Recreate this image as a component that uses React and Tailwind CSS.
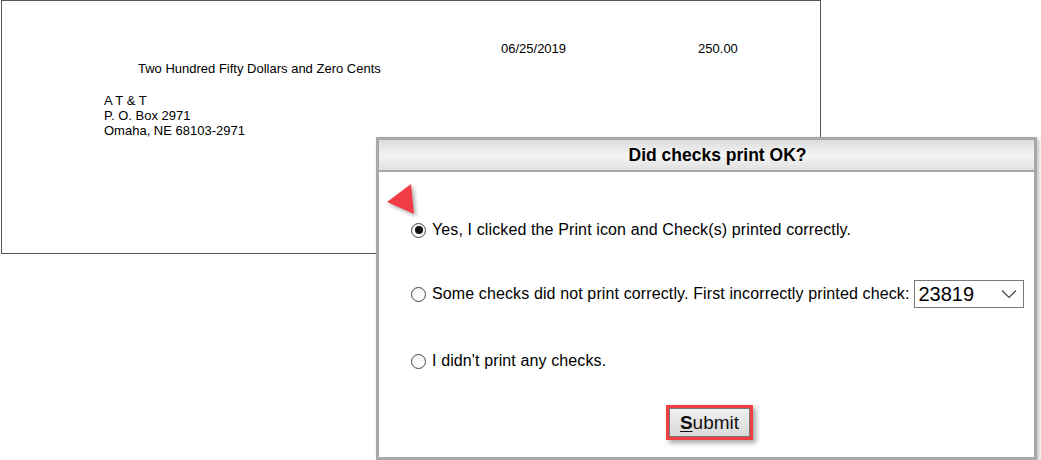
import React from "react";

function Radio({ checked }) {
  return (
    <span className="inline-flex h-[15px] w-[15px] shrink-0 items-center justify-center rounded-full border border-[#444] bg-gradient-to-b from-[#f4f4f4] to-white">
      {checked && <span className="h-[8px] w-[8px] rounded-full bg-[#111]" />}
    </span>
  );
}

export default function App() {
  return (
    <div
      className="relative h-[460px] w-[1041px] overflow-hidden bg-white text-black"
      style={{ fontFamily: '"Liberation Sans", Arial, sans-serif' }}
    >
      {/* Check preview */}
      <div className="ml-[1px] h-[254px] w-[820px] border border-[#555] text-[13px] leading-[15px]">
        <div className="flex pt-[40px]">
          <span className="ml-[499px]">06/25/2019</span>
          <span className="ml-[132px]">250.00</span>
        </div>
        <div className="ml-[136px] mt-[5px]">Two Hundred Fifty Dollars and Zero Cents</div>
        <div className="ml-[102px] mt-[17px] flex flex-col">
          <span>A T &amp; T</span>
          <span>P. O. Box 2971</span>
          <span>Omaha, NE 68103-2971</span>
        </div>
      </div>

      {/* Dialog */}
      <div className="absolute left-[376px] top-[137px] h-[323px] w-[661px] border-[3px] border-[#a9a9a9] bg-white shadow-[2px_2px_4px_rgba(0,0,0,0.25)]">
        <div className="flex h-[32px] items-center justify-center border-b-2 border-[#a8a8a8] bg-gradient-to-b from-[#dcdcdc] via-[#f4f4f4] to-[#e2e2e2] pl-[22px] text-[17.5px] font-bold">
          Did checks print OK?
        </div>
        <div className="text-[16px] leading-[18px] tracking-[0.12px]">
          <div className="ml-[32px] mt-[49px] flex items-center gap-[6px]">
            <Radio checked />
            <span>Yes, I clicked the Print icon and Check(s) printed correctly.</span>
          </div>
          <div className="ml-[32px] mt-[41px] flex items-center gap-[6px]">
            <Radio />
            <span>Some checks did not print correctly. First incorrectly printed check:</span>
            <div className="ml-[-1px] flex h-[28px] w-[110px] items-center justify-between border border-[#7a7a7a] bg-white pl-[3px] pr-[6px] text-[20px] tracking-normal">
              <span>23819</span>
              <svg width="16" height="10" viewBox="0 0 16 10" fill="none">
                <path d="M1 1.5 L8 8.5 L15 1.5" stroke="#444" strokeWidth="1.2" />
              </svg>
            </div>
          </div>
          <div className="ml-[32px] mt-[44px] flex items-center gap-[6px]">
            <Radio />
            <span>I didn't print any checks.</span>
          </div>
          <div className="mt-[35px] flex justify-center pl-[6px]">
            <div className="border-[3px] border-[#ef3f43] shadow-[3px_3px_5px_rgba(0,0,0,0.35)]">
              <button className="flex h-[29px] w-[81px] items-center justify-center border border-[#777] bg-gradient-to-b from-[#f0f0f0] to-[#d9d9d9] text-[19px] leading-none tracking-normal text-[#111]">
                <span className="font-bold underline underline-offset-2">S</span>
                <span>ubmit</span>
              </button>
            </div>
          </div>
        </div>
      </div>

      {/* Red arrow */}
      <svg
        className="absolute left-[384px] top-[181px]"
        width="36"
        height="38"
        viewBox="0 0 36 38"
        style={{ filter: "drop-shadow(2px 2px 2px rgba(0,0,0,0.35))" }}
      >
        <polygon points="3,21 27,3 30,33" fill="#f23c45" />
      </svg>
    </div>
  );
}
